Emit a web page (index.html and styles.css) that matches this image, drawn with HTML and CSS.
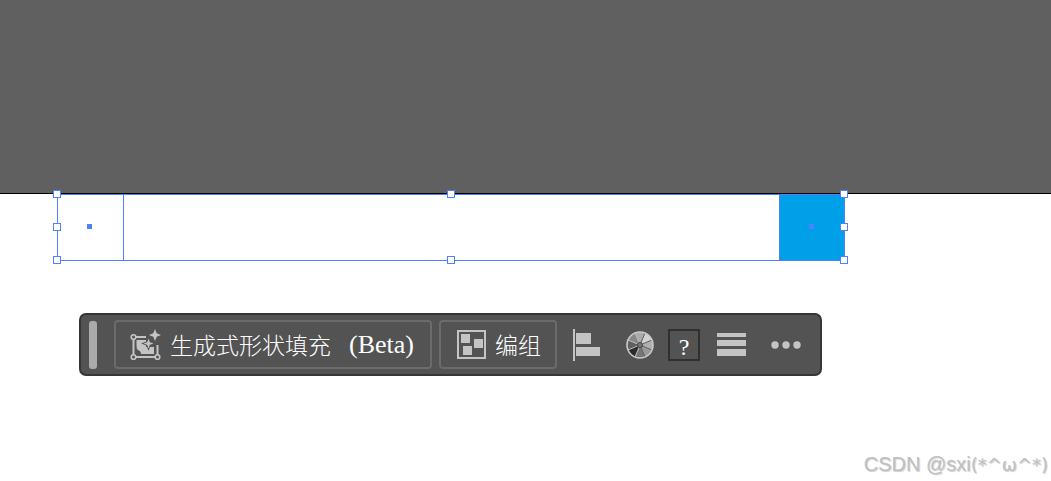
FILE: index.html
```html
<!DOCTYPE html>
<html lang="zh-CN">
<head>
    <meta charset="UTF-8">
    <meta name="viewport" content="width=device-width, initial-scale=1.0">
    <title>画板</title>
    <link rel="stylesheet" href="styles.css">
</head>
<body>
    <div class="pasteboard"></div>

    <main class="artboard">
        <div class="selection">
            <div class="shape"><span class="center"></span></div>
            <div class="shape filled"><span class="center"></span></div>
            <span class="handle top left"></span>
            <span class="handle top middle"></span>
            <span class="handle top right"></span>
            <span class="handle side left"></span>
            <span class="handle side right"></span>
            <span class="handle bottom left"></span>
            <span class="handle bottom middle"></span>
            <span class="handle bottom right"></span>
        </div>

        <div class="taskbar" role="toolbar">
            <span class="grip"></span>
            <button class="btn wide">
                <svg width="32" height="32" viewBox="0 0 32 32">
                    <path d="M3.500 8H16M3.500 8V28H27.500V16" fill="none" stroke="#c4c4c4" stroke-width="2"/>
                    <path d="M6.500 11H16V18H24V25H11Q11 22 8 21Q6.500 20 6.500 17Z" fill="#c4c4c4"/>
                    <path d="M18.500 7L20.500 12.500L26 14.500L20.500 16.500L18.500 22L16.500 16.500L11 14.500L16.500 12.500Z" fill="#535353"/>
                    <path d="M18.500 9.500L19.800 13.200L23.500 14.500L19.800 15.800L18.500 19.500L17.200 15.800L13.500 14.500L17.200 13.200Z" fill="#c4c4c4"/>
                    <path d="M25 0L26.700 4.300L31 6L26.700 7.700L25 12L23.300 7.700L19 6L23.300 4.300Z" fill="#c4c4c4"/>
                    <g fill="#535353" stroke="#c4c4c4" stroke-width="1.6">
                        <circle cx="3.500" cy="8" r="2.3"/>
                        <circle cx="3.500" cy="28" r="2.3"/>
                        <circle cx="27.500" cy="28" r="2.3"/>
                    </g>
                </svg>
                <span class="label">生成式形状填充</span>
                <span class="latin">(Beta)</span>
            </button>
            <button class="btn">
                <svg width="30" height="30" viewBox="0 0 30 30">
                    <rect x="1" y="1" width="27" height="27" fill="none" stroke="#c4c4c4" stroke-width="2"/>
                    <path d="M4 4h9v9H4zM17 9h9v9h-9zM6 16h9v9H6z" fill="#c4c4c4"/>
                </svg>
                <span class="label">编组</span>
            </button>
            <div class="tools">
                <button class="tool" aria-label="对齐">
                    <svg width="28" height="32" viewBox="0 0 28 32">
                        <path d="M0 0h2v32H0zM3 4h15v11H3zM3 18h24v9H3z" fill="#c4c4c4"/>
                    </svg>
                </button>
                <button class="tool" aria-label="重新着色">
                    <svg width="28" height="28" viewBox="-14 -14 28 28">
                        <circle r="13" fill="#999"/>
                        <path d="M0 0L5 -12A13 13 0 0 1 12 -5Z" fill="#d2d2d2"/>
                        <path d="M0 0L12 -5A13 13 0 0 1 12 5Z" fill="#b0b0b0"/>
                        <path d="M0 0L-5 -12A13 13 0 0 1 5 -12Z" fill="#aaa"/>
                        <path d="M0 0L-12 -5A13 13 0 0 1 -5 -12Z" fill="#888"/>
                        <path d="M0 0L-12 5A13 13 0 0 1 -12 -5Z" fill="#606060"/>
                        <path d="M0 0L-5 12A13 13 0 0 1 -12 5Z" fill="#2c2c2c"/>
                        <path d="M0 0L5 12A13 13 0 0 1 -5 12Z" fill="#777"/>
                        <path d="M0 0L5 12M5 -12L0 0M0 0L12 5M0 0L12 -5" stroke="#606060"/>
                        <path d="M-5 -12L0 0L-12 -5M-12 5L0 0L-5 12" fill="none" stroke="#bbb"/>
                        <circle r="13" fill="none" stroke="#c8c8c8" stroke-width="1.6"/>
                        <circle r="2.5" fill="#777" stroke="#444"/>
                    </svg>
                </button>
                <button class="tool help">?</button>
                <button class="tool" aria-label="描边">
                    <svg width="29" height="24" viewBox="0 0 29 24">
                        <path d="M0 0h29v4H0zM0 7h29v6H0zM0 16h29v7H0z" fill="#c4c4c4"/>
                    </svg>
                </button>
                <button class="tool more" aria-label="更多">
                    <svg width="30" height="8" viewBox="0 0 30 8">
                        <g fill="#c4c4c4">
                            <circle cx="4" cy="4" r="3.7"/>
                            <circle cx="15" cy="4" r="3.7"/>
                            <circle cx="26" cy="4" r="3.7"/>
                        </g>
                    </svg>
                </button>
            </div>
        </div>
    </main>

    <footer class="credit">CSDN @sxi<span class="face">(*^ω^*)</span></footer>
</body>
</html>
```
FILE: styles.css
```css
* {
    box-sizing: border-box;
}
body {
    display: flex;
    flex-direction: column;
    min-height: 100vh;
    margin: 0;
    background-color: #fff;
    font-family: "Noto Sans CJK SC", sans-serif;
}
.pasteboard {
    height: 194px;
    background-color: #606060;
    border-bottom: 1px solid #000;
}

/* selected shapes */
.selection {
    position: relative;
    display: flex;
    justify-content: space-between;
    margin-left: 57px;
    margin-right: 206px;
    border: 1px solid #4f80ff;
}
.shape {
    display: flex;
    align-items: center;
    justify-content: center;
    width: 66px;
    height: 65px;
    padding: 0 2px 2px 0;
    border-right: 1px solid #4f80ff;
}
.shape.filled {
    width: 65px;
    padding: 0 1px 2px 0;
    background-color: #00a0e9;
    border-right: none;
    border-left: 1px solid #4f80ff;
}
.center {
    width: 5px;
    height: 5px;
    background-color: #4f80ff;
}
.handle {
    position: absolute;
    width: 8px;
    height: 8px;
    background-color: #fff;
    border: 1px solid #4f80ff;
}
.top {
    top: -5px;
}
.side {
    top: calc(50% - 5px);
}
.bottom {
    bottom: -4px;
}
.left {
    left: -5px;
}
.middle {
    left: calc(50% - 4px);
}
.right {
    right: -4px;
}

/* contextual task bar */
.taskbar {
    display: flex;
    align-items: center;
    width: fit-content;
    margin-top: 52px;
    margin-left: 79px;
    padding: 5px 19px 5px 8px;
    background-color: #535353;
    border: 2px solid #363636;
    border-radius: 7px;
}
.grip {
    width: 8px;
    height: 48px;
    margin-right: 17px;
    background-color: #aaa;
    border-radius: 3px;
}
button {
    padding: 0;
    border: none;
    background: none;
    color: #fff;
    font-family: inherit;
    cursor: pointer;
}
svg {
    display: block;
}
.btn {
    display: flex;
    align-items: center;
    gap: 8px;
    height: 49px;
    margin-right: 7px;
    padding: 0 14px 0 16px;
    border: 2px solid #6b6b6b;
    border-radius: 4px;
    font-size: 23px;
    line-height: 32px;
    white-space: nowrap;
}
.btn.wide {
    padding: 0 16px 0 14px;
}
.label {
    padding-bottom: 2px;
    font-weight: 300;
}
.latin {
    margin-left: 10px;
    font-family: "Liberation Serif", serif;
    font-size: 26px;
}
.tools {
    display: flex;
    align-items: center;
    margin-left: 9px;
}
.tool {
    margin-right: 25px;
}
.tool.help {
    width: 32px;
    height: 32px;
    margin-left: -11px;
    margin-right: 17px;
    padding-top: 4px;
    border: 2px solid #303030;
    font-family: "Liberation Serif", serif;
    font-size: 24px;
    line-height: 24px;
}
.tool.more {
    margin-right: 0;
}

.credit {
    margin-top: auto;
    padding: 0 3px 3px;
    color: #c0c0c0;
    font-family: "Liberation Sans", sans-serif;
    font-size: 20px;
    line-height: 26px;
    text-align: right;
    text-shadow: 1px 1px 1px #ccc;
}
.face {
    font-family: "DejaVu Sans", sans-serif;
    font-size: 18px;
}
```
